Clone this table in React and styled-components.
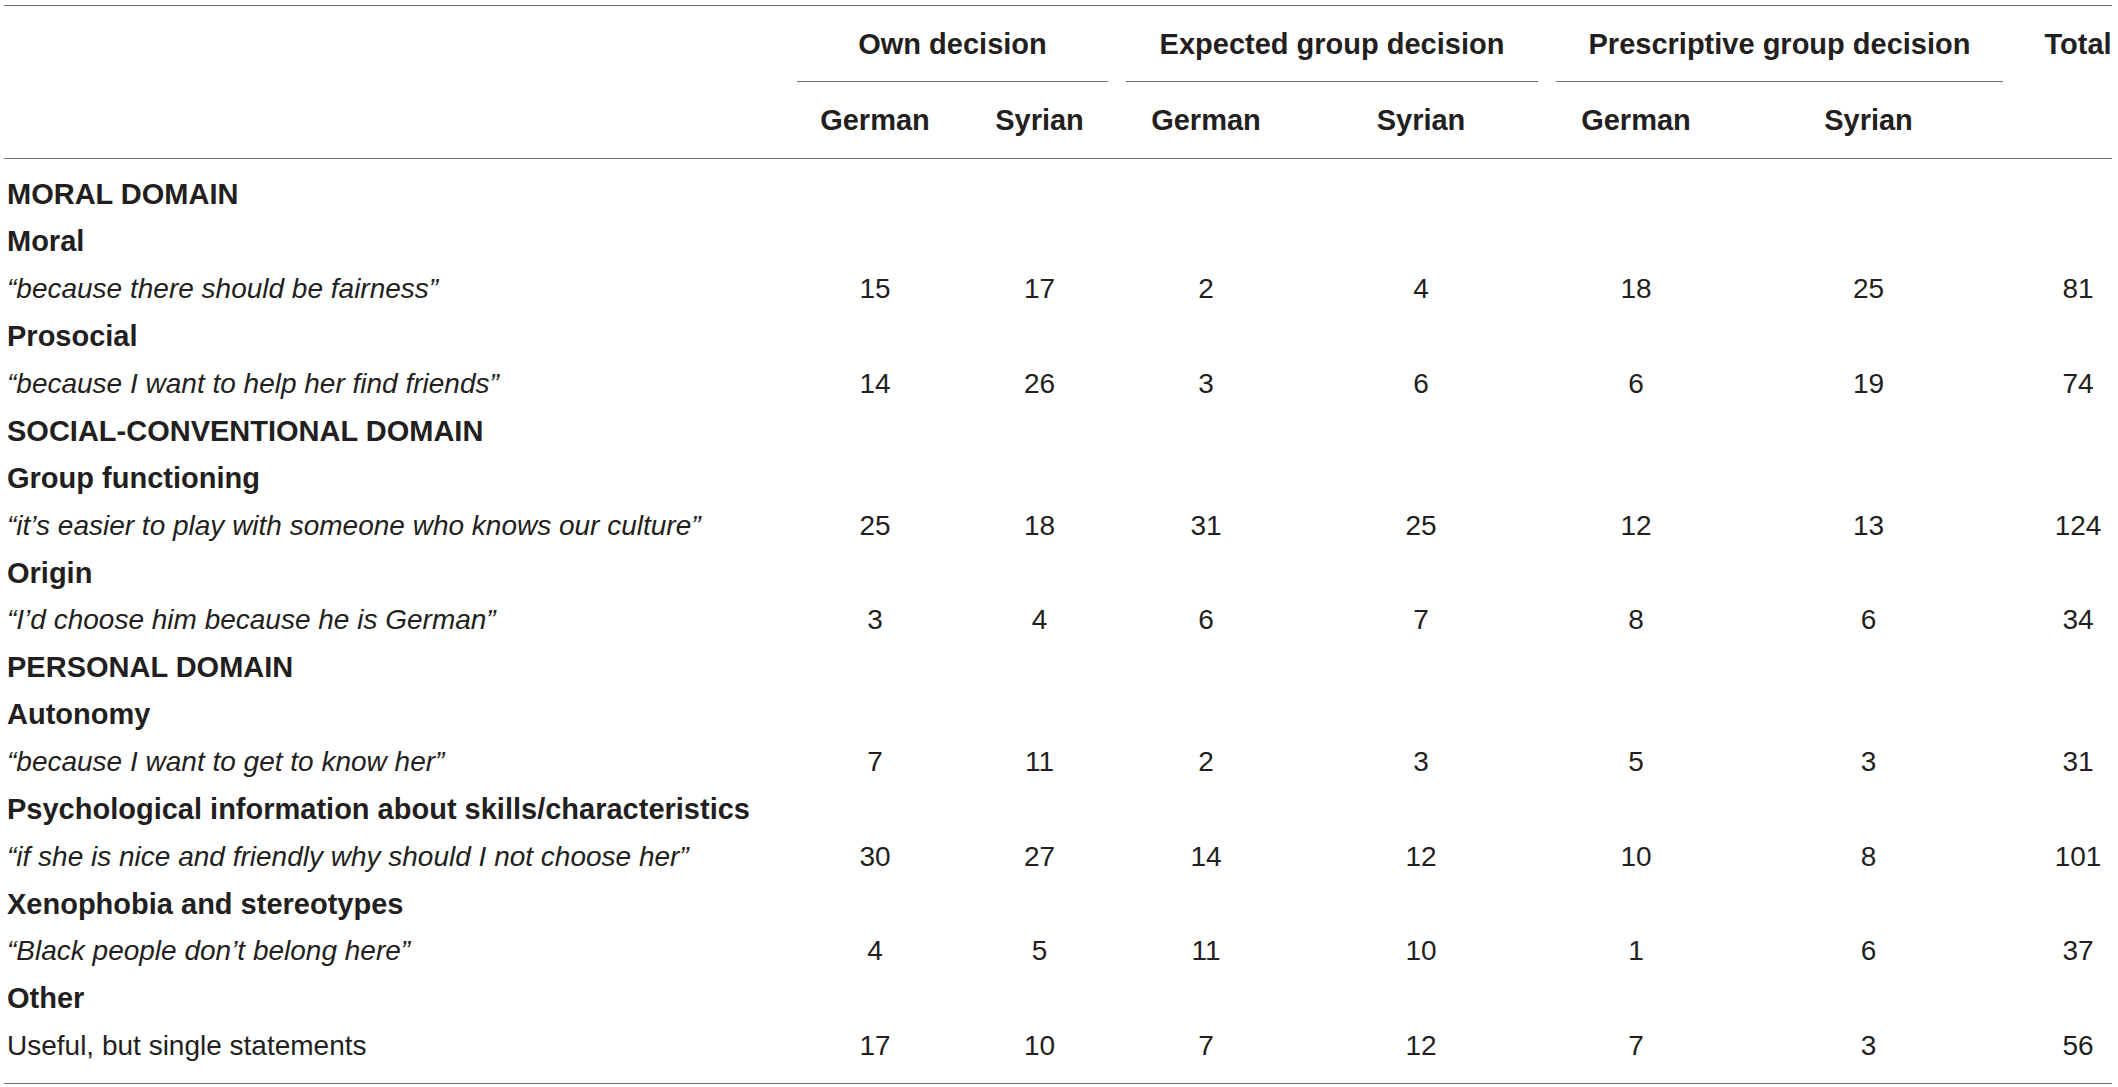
import React from "react";
import styled, { createGlobalStyle } from "styled-components";

const GlobalStyle = createGlobalStyle`
  html, body {
    margin: 0;
    padding: 0;
    background: #ffffff;
  }
  body {
    font-family: "Liberation Sans", Arial, Helvetica, sans-serif;
    color: #231f20;
  }
`;

const Page = styled.div`
  padding: 5px 6px 0 4px;
`;

const Table = styled.table`
  width: 2108px;
  table-layout: fixed;
  border-collapse: collapse;
  border-top: 1px solid #6d6d6d;
  border-bottom: 1px solid #6d6d6d;
  font-size: 28px;
  color: #231f20;
`;

const Head = styled.thead`
  border-bottom: 1px solid #6d6d6d;
`;

const HeadCell = styled.th`
  font-weight: bold;
  font-size: 29px;
  text-align: center;
  vertical-align: middle;
  padding: 0;
  height: ${(p) => p.$h || 76}px;
  white-space: nowrap;
  ${(p) => p.$total && "padding-left: 32px;"}
`;

const GroupLabel = styled.div`
  margin: 0 9px 0 9px;
  height: 76px;
  display: flex;
  align-items: center;
  justify-content: center;
  border-bottom: 1px solid #6d6d6d;
  box-sizing: border-box;
  padding-top: 2px;
`;

const Row = styled.tr`
  &:first-child td {
    padding-top: 12px;
  }
  &:last-child td {
    padding-bottom: 13px;
  }
`;

const LabelCell = styled.td`
  height: 47.3px;
  padding: 0 0 0 3px;
  vertical-align: middle;
  white-space: nowrap;
  font-weight: ${(p) => (p.$kind === "quote" || p.$kind === "plain" ? "normal" : "bold")};
  font-style: ${(p) => (p.$kind === "quote" ? "italic" : "normal")};
  font-size: ${(p) => (p.$kind === "quote" || p.$kind === "plain" ? 28 : 29)}px;
`;

const NumCell = styled.td`
  height: 47.3px;
  padding: 0;
  text-align: center;
  vertical-align: middle;
  ${(p) => p.$total && "padding-left: 32px;"}
`;

const rows = [
  { kind: "section", label: "MORAL DOMAIN" },
  { kind: "cat", label: "Moral" },
  { kind: "quote", label: "“because there should be fairness”", n: [15, 17, 2, 4, 18, 25, 81] },
  { kind: "cat", label: "Prosocial" },
  { kind: "quote", label: "“because I want to help her find friends”", n: [14, 26, 3, 6, 6, 19, 74] },
  { kind: "section", label: "SOCIAL-CONVENTIONAL DOMAIN" },
  { kind: "cat", label: "Group functioning" },
  { kind: "quote", label: "“it’s easier to play with someone who knows our culture”", n: [25, 18, 31, 25, 12, 13, 124] },
  { kind: "cat", label: "Origin" },
  { kind: "quote", label: "“I’d choose him because he is German”", n: [3, 4, 6, 7, 8, 6, 34] },
  { kind: "section", label: "PERSONAL DOMAIN" },
  { kind: "cat", label: "Autonomy" },
  { kind: "quote", label: "“because I want to get to know her”", n: [7, 11, 2, 3, 5, 3, 31] },
  { kind: "cat", label: "Psychological information about skills/characteristics" },
  { kind: "quote", label: "“if she is nice and friendly why should I not choose her”", n: [30, 27, 14, 12, 10, 8, 101] },
  { kind: "cat", label: "Xenophobia and stereotypes" },
  { kind: "quote", label: "“Black people don’t belong here”", n: [4, 5, 11, 10, 1, 6, 37] },
  { kind: "cat", label: "Other" },
  { kind: "plain", label: "Useful, but single statements", n: [17, 10, 7, 12, 7, 3, 56] },
];

const groups = ["Own decision", "Expected group decision", "Prescriptive group decision"];
const widths = [784, 174, 155, 178, 252, 178, 287, 100];

export default function App() {
  return (
    <Page>
      <GlobalStyle />
      <Table>
        <colgroup>
          {widths.map((w, i) => (
            <col key={i} style={{ width: w }} />
          ))}
        </colgroup>
        <Head>
          <tr>
            <HeadCell $h={76} />
            {groups.map((g) => (
              <HeadCell key={g} colSpan={2} $h={76}>
                <GroupLabel>{g}</GroupLabel>
              </HeadCell>
            ))}
            <HeadCell $h={76} $total>
              Total
            </HeadCell>
          </tr>
          <tr>
            <HeadCell />
            {groups.map((g) => (
              <React.Fragment key={g}>
                <HeadCell>German</HeadCell>
                <HeadCell>Syrian</HeadCell>
              </React.Fragment>
            ))}
            <HeadCell $total />
          </tr>
        </Head>
        <tbody>
          {rows.map((r, i) => (
            <Row key={i}>
              <LabelCell $kind={r.kind}>{r.label}</LabelCell>
              {(r.n || [null, null, null, null, null, null, null]).map((v, j) => (
                <NumCell key={j} $total={j === 6}>
                  {v}
                </NumCell>
              ))}
            </Row>
          ))}
        </tbody>
      </Table>
    </Page>
  );
}
